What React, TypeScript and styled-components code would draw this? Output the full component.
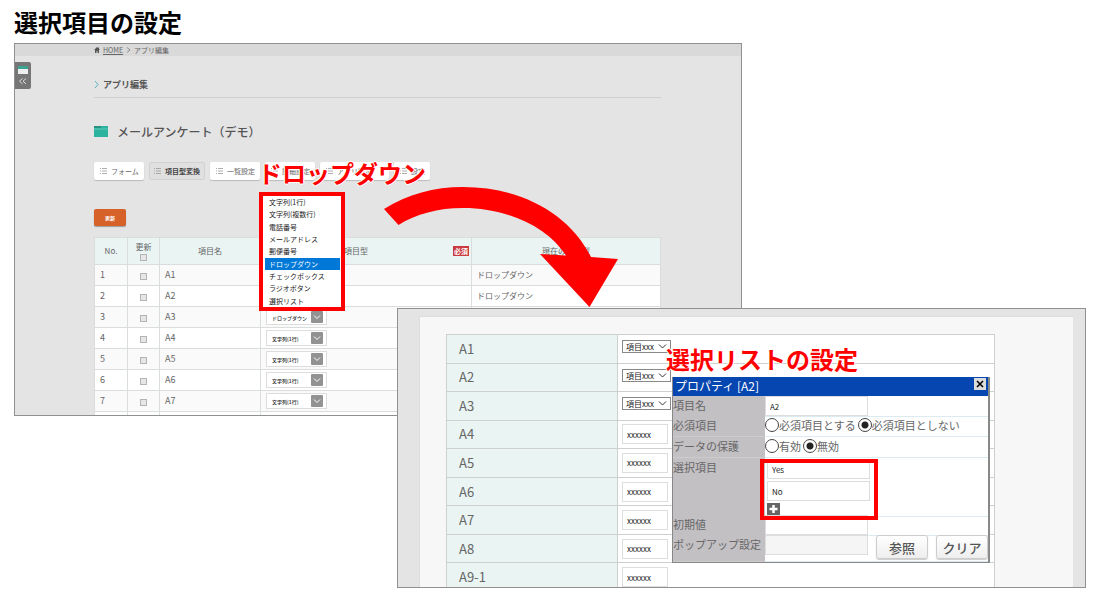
import React from "react";
import styled, { createGlobalStyle } from "styled-components";

const Global = createGlobalStyle`
  *, *::before, *::after { box-sizing: border-box; }
  body { margin: 0; background: #fff; color: #666; }
  body, button, input, select { font-family: "Noto Sans CJK JP", "Noto Sans", sans-serif; }
  button, input, select { margin: 0; }
  h1, h2, h3, ul { margin: 0; padding: 0; }
`;

const Page = styled.main`
  position: relative;
  padding: 4px 14px 11px;
  min-width: 1000px;
`;

const Title = styled.h1`
  color: #000;
  font-size: 24px;
  font-weight: 700;
  line-height: 36px;
  padding-bottom: 3px;
`;

const Stage = styled.div`
  display: grid;
  grid-template-columns: minmax(0, 383fr) minmax(0, 345fr) minmax(0, 344fr);
  align-items: start;
`;

const Shot = styled.section`
  position: relative;
  overflow: hidden;
  background: #e4e4e4;
  border: 1px solid #909090;
  grid-row: 1;
`;

const EditorShot = styled(Shot)`
  grid-column: 1 / 3;
  height: 373px;
`;

const FormShot = styled(Shot)`
  grid-column: 2 / 4;
  height: 280px;
  margin-top: 265px;
  padding: 7px 12px 0 21px;
`;

const Crumbs = styled.nav`
  display: flex;
  align-items: center;
  gap: 3px;
  height: 12px;
  padding-left: 79px;
  background: #d9d9d9;
  font-size: 7px;
  line-height: 10px;
  a { color: #666; }
`;

const SideTab = styled.button`
  position: absolute;
  left: 0;
  top: 18px;
  width: 16px;
  height: 27px;
  padding: 0;
  border: 0;
  border-radius: 0 2px 2px 0;
  background: #767676;
  svg { display: block; }
`;

const EditorBody = styled.div`
  padding: 22px 80px 0 79px;
`;

const SectionHead = styled.h2`
  display: flex;
  align-items: center;
  gap: 4px;
  height: 20px;
  color: #555;
  font-size: 9px;
  font-weight: 700;
  border-bottom: 1px solid #cfcfcf;
  padding-bottom: 6px;
`;

const AppName = styled.h3`
  display: flex;
  align-items: center;
  gap: 9px;
  height: 20px;
  margin-top: 23px;
  color: #555;
  font-size: 12px;
  font-weight: 500;
`;

const Tabs = styled.div`
  display: flex;
  gap: 5px;
  margin-top: 21px;
`;

const Tab = styled.button<{ $on: boolean; $w: number }>`
  display: flex;
  align-items: center;
  gap: 4px;
  flex: none;
  width: ${(p) => p.$w}px;
  height: 18px;
  padding: 0 ${(p) => (p.$on ? 4 : 6)}px;
  border: ${(p) => (p.$on ? "1px solid #d2d2d2" : "0")};
  border-radius: 2px;
  background: ${(p) => (p.$on ? "#e0e0e0" : "#fff")};
  box-shadow: ${(p) => (p.$on ? "none" : "0 1px 1px #bbb")};
  color: ${(p) => (p.$on ? "#444" : "#666")};
  font-size: 7px;
  font-weight: ${(p) => (p.$on ? 700 : 400)};
  white-space: nowrap;
  svg { flex: none; }
`;

const Update = styled.button`
  display: block;
  width: 32px;
  height: 17px;
  margin-top: 29px;
  padding: 0;
  border: 0;
  border-radius: 2px;
  background: #d6622a;
  box-shadow: 0 1px 1px #999;
  color: #fff;
  font-size: 5px;
  font-weight: 700;
`;

const FieldTable = styled.table`
  width: 100%;
  margin-top: 11px;
  border-collapse: collapse;
  table-layout: fixed;
  background: #fff;
  font-size: 9px;
  th, td { border: 1px solid #d9dddc; padding: 0 5px; line-height: 12px; }
  th { height: 27px; background: #e9f4f3; font-size: 8px; font-weight: 400; line-height: 10px; }
  td { height: 21px; font-size: 9px; }
  tbody tr:nth-child(odd) { background: #fafafa; }
  th:nth-child(2), td:nth-child(2) { text-align: center; }
`;

const Tick = styled.input`
  appearance: none;
  display: block;
  width: 7px;
  height: 7px;
  margin: 2px auto 0;
  border: 1px solid #b4b4b4;
  background: #e6e6e6;
`;

const TypeHead = styled.div`
  display: flex;
  align-items: center;
  justify-content: space-between;
  padding-left: 78px;
  margin-right: -3px;
`;

const Required = styled.span`
  padding: 0 1px;
  background: #c9393d;
  color: #fff;
  font-size: 7px;
  font-weight: 700;
  line-height: 10px;
`;

const TypeText = styled.span`
  font-size: 8px;
`;

const Picker = styled.div`
  position: relative;
  width: 61px;
  height: 16px;
  svg { position: absolute; right: 4px; top: 2px; pointer-events: none; }
  select {
    appearance: none;
    display: block;
    width: 100%;
    height: 100%;
    padding: 0 0 0 5px;
    border: 1px solid #ddd;
    border-radius: 0;
    background: #fff;
    color: #222;
    font-size: 5px;
    font-weight: 500;
  }
`;

const Sheet = styled.div`
  height: 100%;
  padding: 17px 78px 0 26px;
  background: #f7f7f7;
  border: 1px solid #ddd;
  border-width: 1px 0 0 1px;
`;

const AnswerTable = styled.table`
  width: 100%;
  height: 258px;
  border-collapse: collapse;
  table-layout: fixed;
  background: #fff;
  th, td { height: 28px; border: 1px solid #ccd1d0; padding: 0 4px; }
  th {
    width: 171px;
    padding-left: 12px;
    background: #e9f4f3;
    font-size: 13px;
    font-weight: 400;
    line-height: 18px;
    text-align: left;
  }
`;

const Choice = styled.div`
  position: relative;
  width: 49px;
  height: 13px;
  margin-bottom: 4px;
  svg { position: absolute; right: 4px; top: 3px; pointer-events: none; }
  select {
    appearance: none;
    display: block;
    width: 100%;
    height: 100%;
    padding: 0 0 0 3px;
    border: 1px solid #888;
    border-radius: 0;
    background: #fff;
    color: #222;
    font-size: 8px;
    line-height: 11px;
  }
`;

const Box = styled.input<{ $w: number; $shade?: boolean }>`
  display: block;
  width: ${(p) => p.$w}px;
  height: 20px;
  padding: 0 4px;
  border: 1px solid #ddd;
  background: ${(p) => (p.$shade ? "#f5f5f5" : "#fff")};
  color: #222;
  font-size: 8px;
`;

const Dialog = styled.section`
  position: absolute;
  left: 274px;
  top: 68px;
  width: 318px;
  border: 1px solid #888;
  border-width: 0 2px 1px 1px;
  background: #fff;
`;

const DialogBar = styled.header`
  display: flex;
  justify-content: space-between;
  align-items: flex-start;
  height: 19px;
  padding: 0 2px;
  background: #0546b0;
  color: #fff;
  h2 { font-size: 12px; font-weight: 400; line-height: 18px; }
`;

const Close = styled.button`
  display: grid;
  place-items: center;
  width: 12px;
  height: 12px;
  margin-top: 1px;
  padding: 0;
  border: 0;
  background: #dcdcdc;
`;

const Property = styled.div<{ $h: number }>`
  display: grid;
  grid-template-columns: 92px 1fr;
  height: ${(p) => p.$h}px;
  font-size: 11px;
  line-height: 18px;
  white-space: nowrap;
`;

const Name = styled.div`
  background: #c3c0c4;
  border-bottom: 1px solid #ccc;
`;

const Value = styled.div`
  display: flex;
  align-items: flex-start;
  gap: 2px;
  border-bottom: 1px solid #dcebf2;
`;

const Option = styled.label`
  display: flex;
  align-items: center;
  height: 18px;
  input {
    appearance: none;
    width: 14px;
    height: 14px;
    margin: 0;
    border: 1px solid #444;
    border-radius: 50%;
    background: #fff;
  }
  input:checked { background: radial-gradient(circle, #222 0 3px, #fff 4px); }
`;

const ItemList = styled.div`
  display: flex;
  flex-direction: column;
  gap: 2px;
  padding: 1px 2px;
`;

const Add = styled.button`
  display: block;
  width: 13px;
  height: 12px;
  padding: 0;
  border: 0;
  background: #666;
  svg { display: block; }
`;

const Action = styled.button`
  width: 52px;
  height: 24px;
  margin-left: 6px;
  padding: 0;
  border: 1px solid #ccc;
  border-radius: 3px;
  background: linear-gradient(#fff, #eee);
  box-shadow: 0 1px 1px #ccc;
  color: #555;
  font-size: 13px;
  font-weight: 500;
`;

const Callout = styled.p<{ $x: number; $y: number }>`
  position: absolute;
  left: ${(p) => p.$x}px;
  top: ${(p) => p.$y}px;
  margin: 0;
  color: #f00;
  font-size: 24px;
  font-weight: 700;
  line-height: 36px;
  white-space: nowrap;
  text-shadow: 1px 0 #fff, -1px 0 #fff, 0 1px #fff, 0 -1px #fff;
`;

const Frame = styled.div`
  position: absolute;
  left: 87px;
  top: 82px;
  width: 118px;
  height: 61px;
  border: 4px solid #f00;
  pointer-events: none;
`;

const Menu = styled.ul`
  position: absolute;
  left: 259px;
  top: 192px;
  display: flex;
  flex-direction: column;
  width: 86px;
  height: 119px;
  padding: 0 1px 0 2px;
  border: 4px solid #f00;
  background: #fff;
  list-style: none;
`;

const MenuItem = styled.li<{ $on: boolean }>`
  display: flex;
  flex: 1;
  align-items: center;
  padding-left: 4px;
  background: ${(p) => (p.$on ? "#0078d7" : "#fff")};
  color: ${(p) => (p.$on ? "#fff" : "#222")};
  font-size: 7px;
  line-height: 12px;
`;

const Arrow = styled.svg`
  position: absolute;
  left: 380px;
  top: 180px;
  pointer-events: none;
`;

const ListIcon = () => (
  <svg width="7" height="8" viewBox="0 0 7 8" stroke="#999" aria-hidden="true">
    <path d="M0 1.5h1M2 1.5h5M0 4h1M2 4h5M0 6.5h1M2 6.5h5" strokeWidth=".8" />
  </svg>
);

const Chevron = () => (
  <svg width="9" height="7" viewBox="0 0 9 7" fill="none" stroke="#333" aria-hidden="true">
    <path d="M1 1.5l3.5 3.5L8 1.5" />
  </svg>
);

const menuItems = [
  "文字列(1行)", "文字列(複数行)", "電話番号", "メールアドレス", "郵便番号",
  "ドロップダウン", "チェックボックス", "ラジオボタン", "選択リスト",
];

const tabs = [
  { label: "フォーム", width: 50 },
  { label: "項目型変換", width: 56 },
  { label: "一覧設定", width: 50 },
  { label: "詳細設定", width: 50 },
  { label: "アプリ設定", width: 69 },
  { label: "設定", width: 36 },
];
const fields = [1, 2, 3, 4, 5, 6, 7];
const answers = ["A1", "A2", "A3", "A4", "A5", "A6", "A7", "A8", "A9-1"];

const Editor = () => (
  <EditorShot>
    <Crumbs>
      <svg width="6" height="6" viewBox="0 0 6 6" fill="#555" aria-hidden="true">
        <path d="M3 0L0 3h1v3h1.5V4h1v2H5V3h1L5 2V.5H4V1z" />
      </svg>
      <a href="#home">HOME</a>
      <svg width="5" height="6" viewBox="0 0 5 6" fill="none" stroke="#777" aria-hidden="true">
        <path d="M1 .5L4 3 1 5.5" strokeWidth=".8" />
      </svg>
      <span>アプリ編集</span>
    </Crumbs>
    <SideTab aria-label="メニューを開く">
      <svg width="16" height="27" viewBox="0 0 16 27" aria-hidden="true">
        <path d="M3 5h10v7H3z" fill="#eee" />
        <path d="M3 4h10v3H3z" fill="#3aa692" />
        <path d="M7.5 16.500l-3 2.700 3 2.700M11 16.500l-3 2.700 3 2.700" fill="none" stroke="#ddd" />
      </svg>
    </SideTab>
    <EditorBody>
      <SectionHead>
        <svg width="5" height="9" viewBox="0 0 5 9" fill="none" stroke="#5cb0bd" aria-hidden="true">
          <path d="M1 1l3 3.500L1 8" />
        </svg>
        アプリ編集
      </SectionHead>
      <AppName>
        <svg width="14" height="11" viewBox="0 0 14 11" aria-hidden="true">
          <path d="M0 0h14v11H0z" fill="#2bb3a0" />
          <path d="M0 0h7v2H0z" fill="#27907f" />
          <path d="M0 3h14" stroke="#8ad6ca" strokeWidth=".6" />
        </svg>
        メールアンケート（デモ）
      </AppName>
      <Tabs>
        {tabs.map((t, i) => (
          <Tab key={t.label} $on={i === 1} $w={t.width}>
            <ListIcon />
            {t.label}
          </Tab>
        ))}
      </Tabs>
      <Update>更新</Update>
      <FieldTable>
        <colgroup>
          <col style={{ width: 33 }} />
          <col style={{ width: 32 }} />
          <col style={{ width: 101 }} />
          <col style={{ width: 211 }} />
          <col />
        </colgroup>
        <thead>
          <tr>
            <th>No.</th>
            <th>
              更新
              <Tick type="checkbox" aria-label="すべて更新" />
            </th>
            <th>項目名</th>
            <th>
              <TypeHead>
                項目型<Required>必須</Required>
              </TypeHead>
            </th>
            <th>現在の項目型</th>
          </tr>
        </thead>
        <tbody>
          {fields.map((n) => (
            <tr key={n}>
              <td>{n}</td>
              <td>
                <Tick type="checkbox" aria-label={`A${n} 更新`} />
              </td>
              <td>A{n}</td>
              <td>
                <Picker>
                  <select aria-label={`A${n} 項目型`}>
                    <option>{n < 4 ? "ドロップダウン" : "文字列(1行)"}</option>
                  </select>
                  <svg width="12" height="12" viewBox="0 0 12 12" aria-hidden="true">
                    <rect width="12" height="12" rx="1" fill="#929292" />
                    <path d="M3 4.500l3 3 3-3" fill="none" stroke="#fff" />
                  </svg>
                </Picker>
              </td>
              <td>{n < 3 && <TypeText>ドロップダウン</TypeText>}</td>
            </tr>
          ))}
          <tr>
            <td /><td /><td /><td /><td />
          </tr>
        </tbody>
      </FieldTable>
    </EditorBody>
  </EditorShot>
);

const Properties = () => (
  <Dialog aria-label="プロパティ">
    <DialogBar>
      <h2>プロパティ [A2]</h2>
      <Close aria-label="閉じる">
        <svg width="8" height="8" viewBox="0 0 8 8" stroke="#000" strokeWidth="1.6" aria-hidden="true">
          <path d="M1 1l6 6M7 1L1 7" />
        </svg>
      </Close>
    </DialogBar>
    <Property $h={20}>
      <Name as="label" htmlFor="name">項目名</Name>
      <Value>
        <Box id="name" $w={103} defaultValue="A2" />
      </Value>
    </Property>
    <Property $h={21}>
      <Name>必須項目</Name>
      <Value>
        <Option><input type="radio" name="required" />必須項目とする</Option>
        <Option><input type="radio" name="required" defaultChecked />必須項目としない</Option>
      </Value>
    </Property>
    <Property $h={21}>
      <Name>データの保護</Name>
      <Value>
        <Option><input type="radio" name="protect" />有効</Option>
        <Option><input type="radio" name="protect" defaultChecked />無効</Option>
      </Value>
    </Property>
    <Property $h={57}>
      <Name>選択項目</Name>
      <Value>
        <ItemList>
          <Box aria-label="選択項目 1" $w={103} defaultValue="Yes" />
          <Box aria-label="選択項目 2" $w={103} defaultValue="No" />
          <Add aria-label="追加">
            <svg width="13" height="12" viewBox="0 0 13 12" stroke="#fff" strokeWidth="2.5" aria-hidden="true">
              <path d="M6.5 2v8M2.5 6h8" />
            </svg>
          </Add>
        </ItemList>
      </Value>
    </Property>
    <Property $h={20}>
      <Name as="label" htmlFor="initial">初期値</Name>
      <Value>
        <Box id="initial" $w={103} />
      </Value>
    </Property>
    <Property $h={27}>
      <Name as="label" htmlFor="popup">ポップアップ設定</Name>
      <Value>
        <Box id="popup" $w={103} $shade />
        <Action>参照</Action>
        <Action>クリア</Action>
      </Value>
    </Property>
    <Frame />
  </Dialog>
);

const AnswerForm = () => (
  <FormShot>
    <Sheet>
      <AnswerTable>
        <tbody>
          {answers.map((a, i) => (
            <tr key={a}>
              <th scope="row">{a}</th>
              <td>
                {i < 3 ? (
                  <Choice>
                    <select aria-label={a}>
                      <option>項目xxx</option>
                    </select>
                    <Chevron />
                  </Choice>
                ) : (
                  <Box aria-label={a} $w={46} defaultValue="xxxxxx" />
                )}
              </td>
            </tr>
          ))}
        </tbody>
      </AnswerTable>
    </Sheet>
    <Properties />
  </FormShot>
);

export default function App() {
  return (
    <>
      <Global />
      <Page>
        <Title>選択項目の設定</Title>
        <Stage>
          <Editor />
          <AnswerForm />
        </Stage>
        <Menu role="listbox" aria-label="項目型">
          {menuItems.map((m) => (
            <MenuItem key={m} role="option" aria-selected={m === "ドロップダウン"} $on={m === "ドロップダウン"}>
              {m}
            </MenuItem>
          ))}
        </Menu>
        <Arrow width="242" height="130" viewBox="380 180 242 130" fill="#f00" aria-hidden="true">
          <path d="M384 209C408 194 434 187 463 187C520 187 569 213 591 257L618 259L589.5 307L540 254L566 255.5C547 226 506 208 463 208C438 208 416 214 398.5 225Z" />
        </Arrow>
        <Callout $x={258} $y={155}>ドロップダウン</Callout>
        <Callout $x={666} $y={341}>選択リストの設定</Callout>
      </Page>
    </>
  );
}
